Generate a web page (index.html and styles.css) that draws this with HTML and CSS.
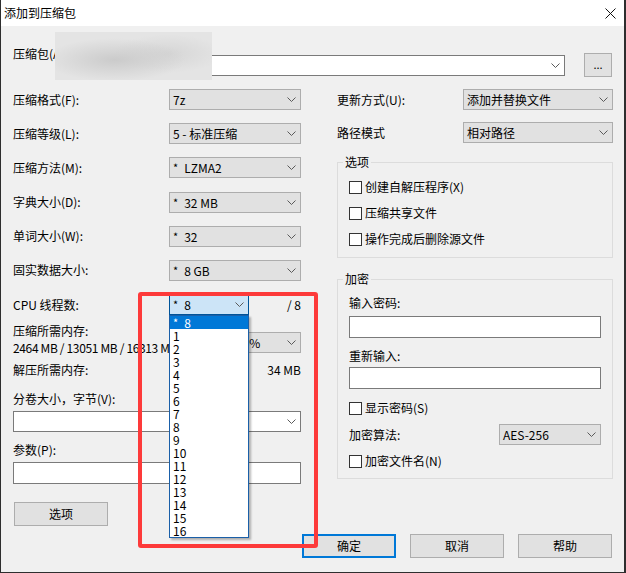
FILE: index.html
```html
<!DOCTYPE html>
<html lang="zh-CN">
<head>
<meta charset="utf-8">
<title>添加到压缩包</title>
<link rel="stylesheet" href="styles.css">
</head>
<body>
<div class="window">
  <div class="titlebar">
    <span class="title">添加到压缩包</span>
    <svg class="close" width="11" height="11" viewBox="0 0 11 11"><path d="M0.5 0.5 L10.5 10.5 M10.5 0.5 L0.5 10.5"/></svg>
  </div>
  <div class="content">
    <div class="archive-row">
      <span class="lbl archive-lbl">压缩包(A):</span>
      <div class="combo edit archive-combo"><span class="ctext"></span><svg class="chev" width="9" height="5" viewBox="0 0 9 5"><path d="M0.5 0.5 L4.5 4.5 L8.5 0.5"/></svg></div>
      <div class="btn browse">...</div>
    </div>
    <div class="columns">
      <div class="col left">
        <div class="lrows">
          <div class="frow"><span class="lbl">压缩格式(F):</span><div class="combo ro"><span class="ctext">7z</span><svg class="chev" width="9" height="5" viewBox="0 0 9 5"><path d="M0.5 0.5 L4.5 4.5 L8.5 0.5"/></svg></div></div>
          <div class="frow"><span class="lbl">压缩等级(L):</span><div class="combo ro"><span class="ctext">5 - 标准压缩</span><svg class="chev" width="9" height="5" viewBox="0 0 9 5"><path d="M0.5 0.5 L4.5 4.5 L8.5 0.5"/></svg></div></div>
          <div class="frow"><span class="lbl">压缩方法(M):</span><div class="combo ro"><span class="ctext"><span class="ast">*</span>LZMA2</span><svg class="chev" width="9" height="5" viewBox="0 0 9 5"><path d="M0.5 0.5 L4.5 4.5 L8.5 0.5"/></svg></div></div>
          <div class="frow"><span class="lbl">字典大小(D):</span><div class="combo ro"><span class="ctext"><span class="ast">*</span>32 MB</span><svg class="chev" width="9" height="5" viewBox="0 0 9 5"><path d="M0.5 0.5 L4.5 4.5 L8.5 0.5"/></svg></div></div>
          <div class="frow"><span class="lbl">单词大小(W):</span><div class="combo ro"><span class="ctext"><span class="ast">*</span>32</span><svg class="chev" width="9" height="5" viewBox="0 0 9 5"><path d="M0.5 0.5 L4.5 4.5 L8.5 0.5"/></svg></div></div>
          <div class="frow"><span class="lbl">固实数据大小:</span><div class="combo ro"><span class="ctext"><span class="ast">*</span>8 GB</span><svg class="chev" width="9" height="5" viewBox="0 0 9 5"><path d="M0.5 0.5 L4.5 4.5 L8.5 0.5"/></svg></div></div>
          <div class="frow cpu"><span class="lbl">CPU 线程数:</span><div class="combo focus"><span class="ctext"><span class="ast">*</span>8</span><svg class="chev" width="9" height="5" viewBox="0 0 9 5"><path d="M0.5 0.5 L4.5 4.5 L8.5 0.5"/></svg></div><span class="rtext">/ 8</span></div>
        </div>
        <div class="mem">
          <div class="memtext">
            <div class="lbl line">压缩所需内存:</div>
            <div class="line nums">2464 MB / 13051 MB / 16313 MB</div>
          </div>
          <div class="combo ro memcombo"><span class="ctext">80%</span><svg class="chev" width="9" height="5" viewBox="0 0 9 5"><path d="M0.5 0.5 L4.5 4.5 L8.5 0.5"/></svg></div>
        </div>
        <div class="decomp line"><span class="lbl">解压所需内存:</span><span>34 MB</span></div>
        <div class="lbl line vol-lbl">分卷大小，字节(V):</div>
        <div class="combo edit vol-combo"><span class="ctext"></span><svg class="chev" width="9" height="5" viewBox="0 0 9 5"><path d="M0.5 0.5 L4.5 4.5 L8.5 0.5"/></svg></div>
        <div class="lbl line par-lbl">参数(P):</div>
        <div class="input par-input"></div>
        <div class="btn opt-btn">选项</div>
      </div>
      <div class="col right">
        <div class="rrow"><span class="lbl">更新方式(U):</span><div class="combo ro"><span class="ctext">添加并替换文件</span><svg class="chev" width="9" height="5" viewBox="0 0 9 5"><path d="M0.5 0.5 L4.5 4.5 L8.5 0.5"/></svg></div></div>
        <div class="rrow r2"><span class="lbl">路径模式</span><div class="combo ro"><span class="ctext">相对路径</span><svg class="chev" width="9" height="5" viewBox="0 0 9 5"><path d="M0.5 0.5 L4.5 4.5 L8.5 0.5"/></svg></div></div>
        <div class="group opts">
          <span class="gtitle">选项</span>
          <div class="chk first"><span class="box"></span><span>创建自解压程序(X)</span></div>
          <div class="chk"><span class="box"></span><span>压缩共享文件</span></div>
          <div class="chk"><span class="box"></span><span>操作完成后删除源文件</span></div>
        </div>
        <div class="group enc">
          <span class="gtitle">加密</span>
          <div class="lbl line e1">输入密码:</div>
          <div class="input e2"></div>
          <div class="lbl line e3">重新输入:</div>
          <div class="input e4"></div>
          <div class="chk e5"><span class="box"></span><span>显示密码(S)</span></div>
          <div class="algo"><span class="lbl">加密算法:</span><div class="combo ro algocombo"><span class="ctext">AES-256</span><svg class="chev" width="9" height="5" viewBox="0 0 9 5"><path d="M0.5 0.5 L4.5 4.5 L8.5 0.5"/></svg></div></div>
          <div class="chk e7"><span class="box"></span><span>加密文件名(N)</span></div>
        </div>
      </div>
    </div>
    <div class="footer">
      <div class="btn default">确定</div>
      <div class="btn">取消</div>
      <div class="btn">帮助</div>
    </div>
  </div>

  <div class="blur"></div>

  <div class="dropdown">
    <div class="item sel"><span class="ast">*</span>8</div>
    <div class="item">1</div>
    <div class="item">2</div>
    <div class="item">3</div>
    <div class="item">4</div>
    <div class="item">5</div>
    <div class="item">6</div>
    <div class="item">7</div>
    <div class="item">8</div>
    <div class="item">9</div>
    <div class="item">10</div>
    <div class="item">11</div>
    <div class="item">12</div>
    <div class="item">13</div>
    <div class="item">14</div>
    <div class="item">15</div>
    <div class="item">16</div>
  </div>

  <div class="annot"></div>
</div>
</body>
</html>
```

FILE: styles.css
```css
html, body {
  margin: 0;
  padding: 0;
  background: #ffffff;
}

body {
  font-family: "Noto Sans CJK SC", "Noto Sans", sans-serif;
  font-size: 12px;
  color: #000;
}

.window {
  position: relative;
  width: 626px;
  height: 573px;
  box-sizing: border-box;
  border: 1px solid #2e2e2e;
  border-right-width: 2px;
  border-top: none;
  background: #f0f0f0;
  overflow: hidden;
}

.titlebar {
  height: 26px;
  background: #ffffff;
  display: flex;
  align-items: center;
  justify-content: space-between;
  padding: 0 8px 0 3px;
}

.title {
  line-height: 16px;
}

.close path {
  stroke: #111;
  stroke-width: 1;
  fill: none;
}

.content {
  padding: 0 11px 0 12px;
}

.lbl {
  line-height: 16px;
  white-space: nowrap;
}

.line {
  line-height: 14px;
  white-space: nowrap;
}

/* generic controls */
.combo {
  box-sizing: border-box;
  height: 21px;
  display: flex;
  align-items: center;
  justify-content: space-between;
  padding: 0 4px 0 3px;
  white-space: nowrap;
}

.combo.ro {
  background: #e1e1e1;
  border: 1px solid #adadad;
}

.combo.edit {
  background: #ffffff;
  border: 1px solid #7a7a7a;
}

.combo.focus {
  background: #cce4f7;
  border: 1px solid #005499;
}

.ctext {
  line-height: 16px;
}

.ast {
  display: inline-block;
  margin-right: 6px;
  font-size: 11px;
  vertical-align: 1px;
}

.chev path {
  stroke: #5a5a5a;
  stroke-width: 1;
  fill: none;
}

.input {
  box-sizing: border-box;
  height: 22px;
  background: #fff;
  border: 1px solid #7a7a7a;
}

.btn {
  box-sizing: border-box;
  width: 94px;
  height: 24px;
  background: #e1e1e1;
  border: 1px solid #adadad;
  display: flex;
  align-items: center;
  justify-content: center;
  line-height: 16px;
}

.btn.default {
  border: 2px solid #0078d7;
}

/* archive row */
.archive-row {
  height: 63px;
  display: flex;
  align-items: flex-start;
}

.archive-lbl {
  margin-top: 20px;
}

.archive-combo {
  flex: 1;
  margin-top: 29px;
  margin-left: 2px;
}

.browse {
  width: 28px;
  height: 24px;
  margin-top: 27px;
  margin-left: 19px;
  margin-right: 1px;
  font-size: 11px;
  padding-bottom: 3px;
}

/* columns */
.columns {
  display: grid;
  grid-template-columns: 288px 276px;
  column-gap: 36px;
  align-items: start;
}

.col {
  display: flex;
  flex-direction: column;
}

.lrows {
  display: flex;
  flex-direction: column;
  gap: 13.2px;
}

.frow {
  height: 21px;
  display: grid;
  grid-template-columns: 156px 132px;
  align-items: center;
}

.frow.cpu {
  grid-template-columns: 156px 80px 1fr;
}

.rtext {
  text-align: right;
  line-height: 16px;
}

.mem {
  margin-top: 9px;
  display: flex;
  justify-content: space-between;
  align-items: flex-start;
}

.nums {
  margin-top: 3px;
  letter-spacing: -0.35px;
}

.memcombo {
  width: 69px;
  margin-top: 8px;
}

.decomp {
  margin-top: 8px;
  display: flex;
  justify-content: space-between;
}

.decomp .lbl {
  line-height: 14px;
}

.vol-lbl {
  margin-top: 15px;
}

.vol-combo {
  margin-top: 5px;
}

.par-lbl {
  margin-top: 11px;
}

.par-input {
  margin-top: 5px;
}

.opt-btn {
  margin-top: 18px;
  margin-left: 1px;
}

/* right column */
.rrow {
  height: 21px;
  display: grid;
  grid-template-columns: 126px 150px;
  align-items: center;
}

.rrow.r2 {
  margin-top: 12px;
}

.group {
  border: 1px solid #dcdcdc;
  padding: 0 11px;
  display: flex;
  flex-direction: column;
}

.gtitle {
  align-self: flex-start;
  margin-top: -8px;
  margin-left: -6px;
  padding: 0 2px;
  background: #f0f0f0;
  line-height: 14px;
}

.opts {
  margin-top: 19px;
  padding-bottom: 10px;
  gap: 10px;
}

.chk {
  display: flex;
  align-items: center;
  line-height: 16px;
  height: 16px;
}

.chk .box {
  box-sizing: border-box;
  width: 13px;
  height: 13px;
  border: 1px solid #333;
  background: #fff;
  margin-right: 3px;
}

.opts .chk.first {
  margin-top: 0;
}

.enc {
  margin-top: 21px;
  padding-bottom: 9px;
}

.e1 { margin-top: 10px; }
.e2 { margin-top: 6px; }
.e3 { margin-top: 11px; }
.e4 { margin-top: 4px; }
.e5 { margin-top: 11px; }

.algo {
  margin-top: 8px;
  height: 21px;
  display: flex;
  align-items: center;
  justify-content: space-between;
}

.algocombo {
  width: 102px;
}

.e7 { margin-top: 8px; }

/* footer */
.footer {
  margin-top: 8px;
  margin-right: 1px;
  display: flex;
  justify-content: flex-end;
  gap: 14px;
}

/* overlays */
.blur {
  position: absolute;
  left: 54px;
  top: 32px;
  width: 157px;
  height: 48px;
  background:
    radial-gradient(ellipse 45% 45% at 38% 58%, rgba(200,200,200,0.9), rgba(200,200,200,0) 100%),
    radial-gradient(ellipse 35% 40% at 72% 45%, rgba(210,210,210,0.8), rgba(210,210,210,0) 100%),
    #e4e4e4;
}

.dropdown {
  position: absolute;
  left: 168px;
  top: 315px;
  width: 80px;
  box-sizing: border-box;
  background: #ffffff;
  border: 1px solid #1a5fa8;
  box-shadow: 2px 2px 2px rgba(0, 0, 0, 0.28);
}

.item {
  height: 13px;
  line-height: 13px;
  padding-left: 3px;
  white-space: nowrap;
}

.item.sel {
  background: #0078d7;
  color: #fff;
}

.annot {
  position: absolute;
  left: 137px;
  top: 292px;
  width: 180px;
  height: 256px;
  box-sizing: border-box;
  border: 4px solid #fd3a3a;
  border-radius: 3px;
}
```
